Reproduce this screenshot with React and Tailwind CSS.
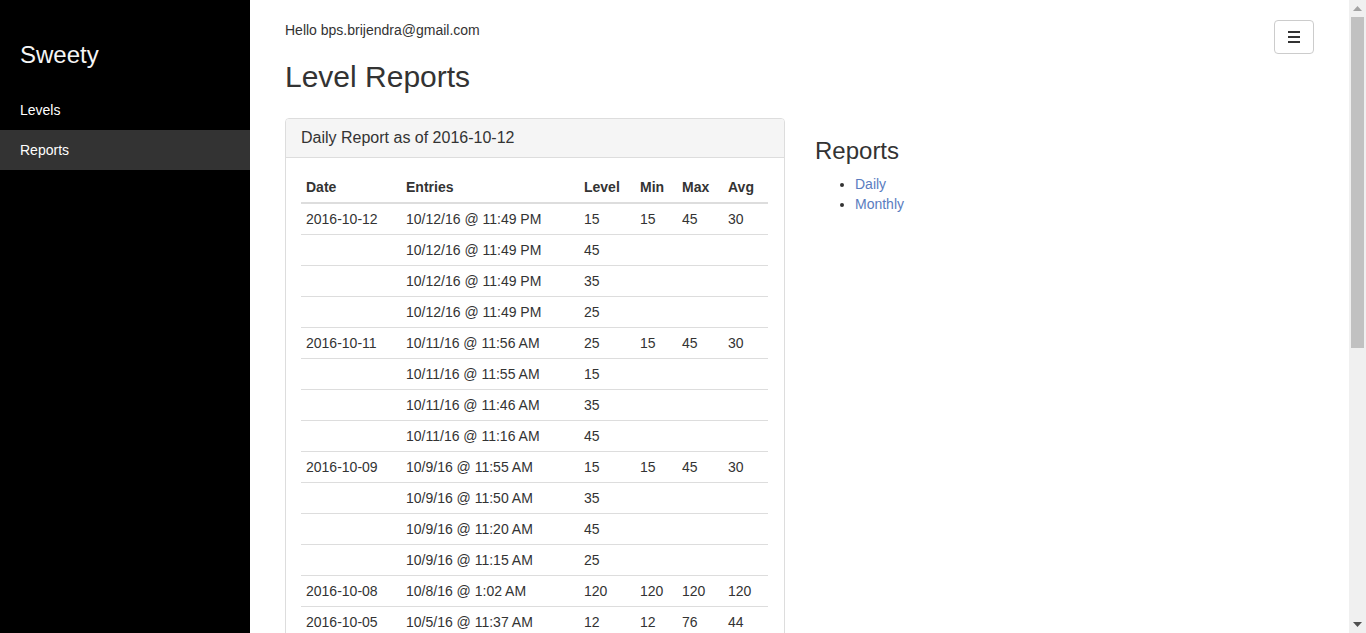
import React from "react";

const rows = [
  ["2016-10-12", "10/12/16 @ 11:49 PM", "15", "15", "45", "30"],
  ["", "10/12/16 @ 11:49 PM", "45", "", "", ""],
  ["", "10/12/16 @ 11:49 PM", "35", "", "", ""],
  ["", "10/12/16 @ 11:49 PM", "25", "", "", ""],
  ["2016-10-11", "10/11/16 @ 11:56 AM", "25", "15", "45", "30"],
  ["", "10/11/16 @ 11:55 AM", "15", "", "", ""],
  ["", "10/11/16 @ 11:46 AM", "35", "", "", ""],
  ["", "10/11/16 @ 11:16 AM", "45", "", "", ""],
  ["2016-10-09", "10/9/16 @ 11:55 AM", "15", "15", "45", "30"],
  ["", "10/9/16 @ 11:50 AM", "35", "", "", ""],
  ["", "10/9/16 @ 11:20 AM", "45", "", "", ""],
  ["", "10/9/16 @ 11:15 AM", "25", "", "", ""],
  ["2016-10-08", "10/8/16 @ 1:02 AM", "120", "120", "120", "120"],
  ["2016-10-05", "10/5/16 @ 11:37 AM", "12", "12", "76", "44"],
];

const widths = ["w-[100px]", "w-[178px]", "w-[56px]", "w-[42px]", "w-[46px]", "w-[45px]"];
const heads = ["Date", "Entries", "Level", "Min", "Max", "Avg"];

export default function App() {
  return (
    <div
      className="flex h-[633px] w-[1366px] overflow-hidden bg-white text-[#333] text-[14px] leading-[20px]"
      style={{ fontFamily: '"Liberation Sans", Arial, sans-serif' }}
    >
      {/* Sidebar */}
      <aside className="w-[250px] shrink-0 bg-black text-white">
        <div className="h-[90px] pl-[20px] pt-[42px] text-[24px] leading-[26px] text-[#f5f5f5]">Sweety</div>
        <div className="h-[40px] px-[20px] py-[10px]">Levels</div>
        <div className="h-[40px] bg-[#333] px-[20px] py-[10px]">Reports</div>
      </aside>

      {/* Main */}
      <main className="flex-1 min-w-0 pl-[35px] pr-[35px] pt-[20px]">
        <div className="flex items-start justify-between">
          <div>
            <div className="h-[20px]">Hello bps.brijendra@gmail.com</div>
            <h1 className="mt-[20px] mb-[25px] text-[30px] leading-[33px]">Level Reports</h1>
          </div>
          <button className="flex h-[34px] w-[40px] flex-col items-center justify-center gap-[3px] rounded-[4px] border border-[#ccc] bg-white">
            <span className="block h-[2px] w-[12px] bg-[#333]" />
            <span className="block h-[2px] w-[12px] bg-[#333]" />
            <span className="block h-[2px] w-[12px] bg-[#333]" />
          </button>
        </div>

        <div className="flex items-start gap-[30px]">
          <div className="w-[500px] shrink-0 rounded-[4px] border border-[#ddd] bg-white">
            <div className="rounded-t-[3px] border-b border-[#ddd] bg-[#f5f5f5] px-[15px] py-[10px] text-[16px] leading-[17.6px]">
              Daily Report as of 2016-10-12
            </div>
            <div className="px-[15px] pt-[14px] pb-[15px]">
              <table className="w-[467px] table-fixed border-collapse">
                <thead>
                  <tr>
                    {heads.map((h, i) => (
                      <th
                        key={h}
                        className={`${widths[i]} border-b-2 border-[#ddd] p-[5px] text-left font-bold`}
                      >
                        {h}
                      </th>
                    ))}
                  </tr>
                </thead>
                <tbody>
                  {rows.map((r, ri) => (
                    <tr key={ri}>
                      {r.map((c, ci) => (
                        <td key={ci} className="border-t border-[#ddd] p-[5px] h-[31px] align-top">
                          {c}
                        </td>
                      ))}
                    </tr>
                  ))}
                </tbody>
              </table>
            </div>
          </div>

          <div className="pt-[20px]">
            <h3 className="text-[24px] leading-[26.4px]">Reports</h3>
            <ul className="mt-[10px] list-disc pl-[40px]">
              <li>
                <a className="text-[#5a7cc0]" href="#">Daily</a>
              </li>
              <li>
                <a className="text-[#5a7cc0]" href="#">Monthly</a>
              </li>
            </ul>
          </div>
        </div>
      </main>

      {/* Scrollbar */}
      <div className="flex w-[17px] shrink-0 flex-col bg-[#f0f0f0]">
        <div className="flex h-[17px] items-center justify-center">
          <svg width="9" height="5" viewBox="0 0 9 5">
            <polygon points="0,5 4.5,0 9,5" fill="#a3a3a3" />
          </svg>
        </div>
        <div className="mx-[2px] h-[331px] bg-[#c1c1c1]" />
        <div className="flex-1" />
        <div className="flex h-[17px] items-center justify-center">
          <svg width="9" height="5" viewBox="0 0 9 5">
            <polygon points="0,0 4.5,5 9,0" fill="#505050" />
          </svg>
        </div>
      </div>
    </div>
  );
}
